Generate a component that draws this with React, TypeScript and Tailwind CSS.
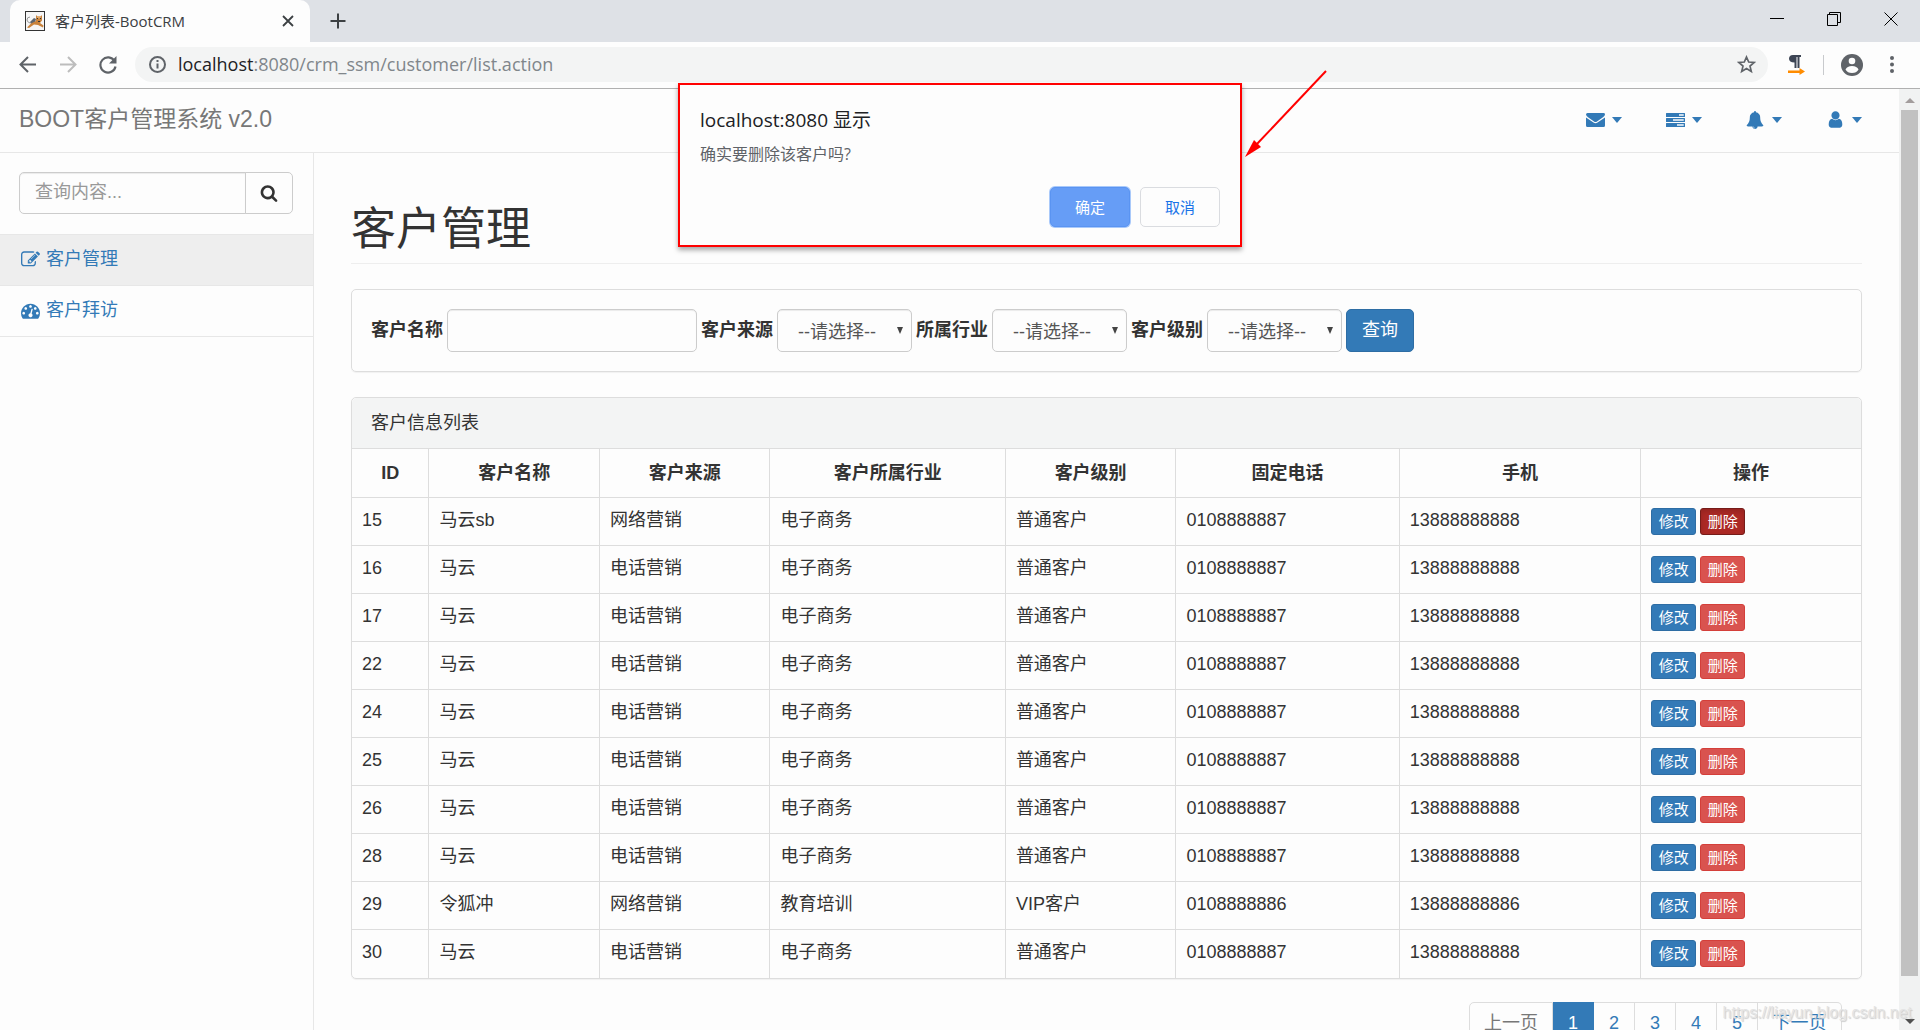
import React, { useState } from "react";

interface Customer {
  id: number;
  name: string;
  source: string;
  industry: string;
  level: string;
  phone: string;
  mobile: string;
}

const common = { industry: "电子商务", level: "普通客户", phone: "0108888887", mobile: "13888888888" };

const customers: Customer[] = [
  { id: 15, name: "马云sb", source: "网络营销", ...common },
  { id: 16, name: "马云", source: "电话营销", ...common },
  { id: 17, name: "马云", source: "电话营销", ...common },
  { id: 22, name: "马云", source: "电话营销", ...common },
  { id: 24, name: "马云", source: "电话营销", ...common },
  { id: 25, name: "马云", source: "电话营销", ...common },
  { id: 26, name: "马云", source: "电话营销", ...common },
  { id: 28, name: "马云", source: "电话营销", ...common },
  { id: 29, name: "令狐冲", source: "网络营销", industry: "教育培训", level: "VIP客户", phone: "0108888886", mobile: "13888888886" },
  { id: 30, name: "马云", source: "电话营销", ...common },
];

const columns = [
  { title: "ID", width: "w-[5.1%]" },
  { title: "客户名称", width: "w-[11.3%]" },
  { title: "客户来源", width: "w-[11.3%]" },
  { title: "客户所属行业", width: "w-[15.6%]" },
  { title: "客户级别", width: "w-[11.3%]" },
  { title: "固定电话", width: "w-[14.8%]" },
  { title: "手机", width: "w-[16%]" },
  { title: "操作", width: "w-[14.6%]" },
];

const filters = [
  { id: "source", label: "客户来源" },
  { id: "industry", label: "所属行业" },
  { id: "level", label: "客户级别" },
];

const EnvelopeIcon = () => (
  <svg className="w-[19px] h-[16px]" viewBox="0 0 19 16" fill="currentColor">
    <path d="M1.5 1h16Q19 1 19 2.4q0 1.3-2 2.8L11 9.4q-1.5 1-3 0L2 5.2Q0 3.8 0 2.5 0 1 1.5 1z" />
    <path d="M0 5.5l7.500 5.100q2 1.300 4 0L19 5.500v8Q19 15 17.500 15h-16Q0 15 0 13.500z" />
  </svg>
);

const TasksIcon = () => (
  <svg className="w-[19px] h-[16px]" viewBox="0 0 19 16" fill="currentColor">
    <path
      fillRule="evenodd"
      d="M.5 1h18q.5 0 .5.500v3q0 .5-.5.500H.5Q0 5 0 4.500v-3Q0 1 .5 1zM13 2.300v1.400h4.700V2.300zM.5 6h18q.5 0 .5.500v3q0 .5-.5.500H.5Q0 10 0 9.500v-3Q0 6 .5 6zM7 7.300v1.400h10.700V7.300zM.5 11h18q.5 0 .5.500v3q0 .5-.5.500H.5Q0 15 0 14.500v-3q0-.5.5-.5zM11 12.300v1.400h6.700v-1.400z"
    />
  </svg>
);

const BellIcon = () => (
  <svg className="w-[18px] h-[18px]" viewBox="0 0 1792 1792" fill="currentColor">
    <path d="M912 1696q0-16-16-16-59 0-101.500-42.500t-42.500-101.500q0-16-16-16t-16 16q0 73 51.500 124.500t124.500 51.500q16 0 16-16zm816-288q0 52-38 90t-90 38h-448q0 106-75 181t-181 75-181-75-75-181h-448q-52 0-90-38t-38-90q50-42 91-88t85-119.500 74.500-158.500 50-206 19.500-260q0-152 117-282.500t307-158.500q-8-19-8-39 0-40 28-68t68-28 68 28 28 68q0 20-8 39 190 28 307 158.500t117 282.500q0 139 19.500 260t50 206 74.500 158.500 85 119.500 91 88z" />
  </svg>
);

const UserIcon = () => (
  <svg className="w-[19px] h-[19px]" viewBox="0 0 1792 1792" fill="currentColor">
    <path d="M1536 1399q0 109-62.500 187t-150.500 78h-854q-88 0-150.500-78t-62.500-187q0-85 8.500-160.500t31.500-152 58.500-131 94-89 134.500-34.500q131 128 313 128t313-128q76 0 134.500 34.500t94 89 58.500 131 31.500 152 8.500 160.500zm-256-887q0 159-112.500 271.500t-271.500 112.500-271.500-112.500-112.500-271.500 112.500-271.500 271.500-112.500 271.500 112.500 112.500 271.500z" />
  </svg>
);

const EditIcon = () => (
  <svg className="w-[19px] h-[19px]" viewBox="0 0 1792 1792" fill="currentColor">
    <path d="M888 1184l116-116-152-152-116 116v56h96v96h56zm440-720q-16-16-33 1l-350 350q-17 17-1 33t33-1l350-350q17-17 1-33zm80 594v190q0 119-84.500 203.500t-203.500 84.500h-832q-119 0-203.500-84.500t-84.500-203.500v-832q0-119 84.500-203.500t203.500-84.500h832q63 0 117 25 15 7 18 23 3 17-9 29l-49 49q-14 14-32 8-23-6-45-6h-832q-66 0-113 47t-47 113v832q0 66 47 113t113 47h832q66 0 113-47t47-113v-126q0-13 9-22l64-64q15-15 35-7t20 29zm-96-738l288 288-672 672h-288v-288zm444 132l-92 92-288-288 92-92q28-28 68-28t68 28l152 152q28 28 28 68t-28 68z" />
  </svg>
);

const DashboardIcon = () => (
  <svg className="w-[19px] h-[19px]" viewBox="0 0 1792 1792" fill="currentColor">
    <path d="M384 1152q0-53-37.500-90.500t-90.500-37.500-90.500 37.500-37.500 90.500 37.500 90.500 90.500 37.500 90.500-37.500 37.500-90.500zm192-448q0-53-37.500-90.500t-90.500-37.500-90.500 37.500-37.500 90.500 37.500 90.500 90.500 37.500 90.500-37.500 37.500-90.500zm428 481l101-382q6-26-7.500-48.500t-38.500-29.500-48 6.500-30 39.500l-101 382q-60 5-107 43.500t-63 98.500q-20 77 20 146t117 89 146-20 89-117q16-60-6-117t-72-91zm660-33q0-53-37.500-90.500t-90.500-37.500-90.500 37.500-37.500 90.500 37.500 90.500 90.500 37.500 90.500-37.500 37.500-90.500zm-640-640q0-53-37.500-90.500t-90.500-37.500-90.500 37.500-37.500 90.500 37.500 90.500 90.500 37.500 90.500-37.500 37.500-90.500zm448 192q0-53-37.500-90.500t-90.500-37.500-90.500 37.500-37.500 90.500 37.500 90.500 90.500 37.500 90.500-37.500 37.500-90.500zm320 448q0 261-141 483-19 29-54 29h-1402q-35 0-54-29-141-221-141-483 0-182 71-348t191-286 286-191 348-71 348 71 286 191 191 286 71 348z" />
  </svg>
);

const SearchIcon = () => (
  <svg className="w-[18px] h-[18px]" viewBox="0 0 1792 1792" fill="currentColor">
    <path d="M1216 832q0-185-131.500-316.500t-316.500-131.500-316.500 131.500-131.500 316.500 131.500 316.500 316.500 131.500 316.500-131.500 131.500-316.500zm512 832q0 52-38 90t-90 38q-54 0-90-38l-343-342q-179 124-399 124-143 0-273.500-55.500t-225-150-150-225-55.500-273.500 55.500-273.500 150-225 225-150 273.500-55.500 273.500 55.500 225 150 150 225 55.500 273.500q0 220-124 399l343 343q37 37 37 90z" />
  </svg>
);

const CatIcon = () => (
  <svg className="w-5 h-5" viewBox="0 0 20 20">
    <rect x="0.5" y="0.5" width="19" height="19" fill="#f6f6f6" stroke="#333" />
    <path d="M5 6Q2 6 2 9q0 2 3 3" fill="none" stroke="#999" />
    <path d="M5 11l4-4 2 1-1 4-4 1z" fill="#5d6670" />
    <path d="M11 4l1.500 1.500h3L17 4v5.500L15 12l3.500 2.500-.5 2-5-2.500-4-.5L4 17l-2-.5L6 12.500l5-2.500z" fill="#c9823b" />
    <path d="M12 5.500h4v2h-4z" fill="#e2a866" />
    <path d="M12 7.500h1M15 7.500h1M13 10.500h2" stroke="#333" />
  </svg>
);

const Caret = () => <span className="border-x-[5px] border-t-[6px] border-x-transparent border-t-[#337ab7]" />;

const navMenus = [
  { label: "消息", icon: <EnvelopeIcon /> },
  { label: "任务", icon: <TasksIcon /> },
  { label: "通知", icon: <BellIcon /> },
  { label: "用户", icon: <UserIcon /> },
];

const BrowserChrome: React.FC = () => (
  <header className="shrink-0 border-b border-[#b0b0b0] font-['Open_Sans','Noto_Sans_CJK_SC',sans-serif]">
    <div className="flex h-[42px] bg-[#dee1e6] text-[#3c4043]">
      <div className="ml-[10px] flex w-[300px] items-center rounded-t-[10px] bg-[#fdfdfd] pl-[15px] pr-3">
        <CatIcon />
        <span className="ml-[10px] flex-1 text-[15px]">客户列表-BootCRM</span>
        <button aria-label="关闭标签页" className="p-1">
          <svg className="h-3 w-3" viewBox="0 0 12 12" stroke="#3c4043" strokeWidth="1.8">
            <path d="M1 1l10 10M11 1L1 11" />
          </svg>
        </button>
      </div>
      <button aria-label="新标签页" className="ml-5">
        <svg className="h-4 w-4" viewBox="0 0 16 16" stroke="#3c4043" strokeWidth="2">
          <path d="M8 .5v15M.5 8h15" />
        </svg>
      </button>
      <div className="ml-auto flex items-center gap-[43px] pb-[5px] pr-[22px]">
        <button aria-label="最小化">
          <svg className="h-[14px] w-[14px]" viewBox="0 0 14 14" stroke="#000">
            <path d="M0 6.5h14" />
          </svg>
        </button>
        <button aria-label="还原">
          <svg className="h-[14px] w-[14px]" viewBox="0 0 14 14" stroke="#000" fill="none">
            <path d="M.5 2.500h10v11H.5zM2.500 2.500v-2h11v10h-3" />
          </svg>
        </button>
        <button aria-label="关闭">
          <svg className="h-[14px] w-[14px]" viewBox="0 0 14 14" stroke="#000">
            <path d="M.5.5l13 13M13.500.5l-13 13" />
          </svg>
        </button>
      </div>
    </div>
    <div className="flex h-[46px] items-center bg-[#fdfdfd] pb-px pl-[19px] pr-[26px] text-[#5f6368]">
      <button aria-label="后退">
        <svg className="h-[17px] w-[17px]" viewBox="0 0 17 17" fill="none" stroke="#5f6368" strokeWidth="2">
          <path d="M17 8.500H2M9 1L1.500 8.500 9 16" />
        </svg>
      </button>
      <button aria-label="前进" className="ml-6">
        <svg className="h-[17px] w-[17px]" viewBox="0 0 17 17" fill="none" stroke="#bdbdbd" strokeWidth="2">
          <path d="M0 8.500h15M8 1l7.500 7.500L8 16" />
        </svg>
      </button>
      <button aria-label="刷新" className="ml-[22px]">
        <svg className="h-[18px] w-[18px]" viewBox="0 0 18 18" fill="none" stroke="#5f6368" strokeWidth="2.2">
          <path d="M15.500 5A7.600 7.600 0 1 0 16.500 10.500" />
          <path d="M17.500 0v7.500H10z" fill="#5f6368" stroke="none" />
        </svg>
      </button>
      <div className="ml-[18px] flex h-[35px] flex-1 items-center rounded-full bg-[#f3f4f4] pl-[14px] pr-3">
        <svg className="h-[17px] w-[17px]" viewBox="0 0 17 17" fill="none" stroke="#5f6368" strokeWidth="2">
          <circle cx="8.5" cy="8.5" r="7.5" />
          <path d="M8.500 7.500v5M8.500 4v2" />
        </svg>
        <p className="ml-3 flex-1 text-[18px] text-[#80868b]">
          <span className="text-[#202124]">localhost</span>:8080/crm_ssm/customer/list.action
        </p>
        <button aria-label="收藏">
          <svg className="h-[19px] w-[19px]" viewBox="0 0 19 19" fill="none" stroke="#5f6368" strokeWidth="1.7">
            <path d="M9.500 2l2.200 5 5.400.5-4.100 3.600 1.300 5.300-4.800-2.900-4.800 2.900L6 11.100 1.900 7.500 7.300 7z" />
          </svg>
        </button>
      </div>
      <svg className="ml-5 h-5 w-[17px]" viewBox="0 0 17 20">
        <path d="M5 0h8v2h-1.500v11h-2V2H8.500v11h-2V7.500Q1 7.500 1 3.800 1 0 5 0z" fill="#3d4554" />
        <path d="M0 15.500h11.500v-2.500l5.500 3.500-5.500 3.500V18H0z" fill="#ff8c00" />
      </svg>
      <span className="ml-[18px] h-5 w-px bg-[#c8cacd]" />
      <button aria-label="用户资料" className="ml-[17px]">
        <svg className="h-[22px] w-[22px]" viewBox="0 0 22 22">
          <circle cx="11" cy="11" r="11" fill="#5f6368" />
          <circle cx="11" cy="7" r="3.3" fill="#fdfdfd" />
          <path d="M4.500 15.500Q6 12 11 12t6.500 3.500Q15.500 19 11 19t-6.500-3.500z" fill="#fdfdfd" />
        </svg>
      </button>
      <button aria-label="更多" className="ml-[27px]">
        <svg className="h-[17px] w-1" viewBox="0 0 4 17" fill="#5f6368">
          <circle cx="2" cy="2" r="2" />
          <circle cx="2" cy="8.5" r="2" />
          <circle cx="2" cy="15" r="2" />
        </svg>
      </button>
    </div>
  </header>
);

const ConfirmDialog: React.FC<{ onClose: () => void }> = ({ onClose }) => (
  <div
    role="dialog"
    aria-labelledby="confirm-title"
    className="absolute left-1/2 top-[83px] z-20 w-[564px] -translate-x-1/2 border-2 border-[#f00] bg-[#fdfdfd] px-5 pb-[18px] pt-[22px] font-['Open_Sans','Noto_Sans_CJK_SC',sans-serif] shadow-[0_3px_5px_rgba(0,0,0,0.35)]"
  >
    <h2 id="confirm-title" className="text-[19px] leading-[26px] text-[#202124]">localhost:8080 显示</h2>
    <p className="mt-2 text-base leading-[26px] text-[#5f6368]">确实要删除该客户吗?</p>
    <div className="mt-5 flex justify-end gap-[10px] text-[15px]">
      <button
        onClick={onClose}
        className="h-10 w-20 rounded-[5px] border border-[#5a94f2] bg-[#669df6] text-white ring-1 ring-[#a9c9fa]"
      >
        确定
      </button>
      <button onClick={onClose} className="h-10 w-20 rounded-[5px] border border-[#dadce0] text-[#1a73e8]">
        取消
      </button>
    </div>
    {/* Arrow pointing at the dialog */}
    <svg className="absolute -right-[88px] -top-[16px] h-[90px] w-[88px]" viewBox="0 0 88 90">
      <path d="M86 2L16 76" stroke="#f00" strokeWidth="2" />
      <path d="M5 88l9-17 3 3 4 4z" fill="#f00" />
    </svg>
  </div>
);

const Sidebar: React.FC = () => (
  <aside className="w-[314px] shrink-0 border-r border-[#e7e7e7]">
    <form className="flex px-[19px] pb-5 pr-5 pt-[19px]" onSubmit={(e) => e.preventDefault()}>
      <input
        type="text"
        aria-label="查询内容"
        placeholder="查询内容..."
        className="h-[42px] w-0 flex-1 rounded-l-[5px] border border-[#ccc] bg-[#fdfdfd] px-[15px] pb-[2px] shadow-[inset_0_1px_1px_rgba(0,0,0,0.075)] placeholder:text-[#999]"
      />
      <button aria-label="查询" className="-ml-px flex w-12 items-center justify-center rounded-r-[5px] border border-[#ccc]">
        <SearchIcon />
      </button>
    </form>
    <nav className="text-[#337ab7]">
      <a href="#customer" className="flex h-[52px] items-center gap-[6px] border-y border-[#e7e7e7] bg-[#eee] pb-[2px] pl-[21px]">
        <EditIcon />
        客户管理
      </a>
      <a href="#visit" className="flex h-[51px] items-center gap-[6px] border-b border-[#e7e7e7] pb-[2px] pl-[21px]">
        <DashboardIcon />
        客户拜访
      </a>
    </nav>
  </aside>
);

const CustomerTable: React.FC<{ activeId: number; onDelete: (id: number) => void }> = ({ activeId, onDelete }) => (
  <section className="mt-[25px] rounded-[5px] border border-[#ddd] shadow-[0_1px_1px_rgba(0,0,0,0.05)]">
    <h2 className="h-[50px] rounded-t-[5px] bg-[#f3f4f4] px-[19px] leading-[51px]">客户信息列表</h2>
    <table className="w-full table-fixed border-collapse">
      <thead>
        <tr className="h-[49px] border-y border-[#ddd]">
          {columns.map((col) => (
            <th key={col.title} className={`${col.width} border-l border-[#ddd] font-bold first:border-l-0`}>
              {col.title}
            </th>
          ))}
        </tr>
      </thead>
      <tbody>
        {customers.map((c) => (
          <tr key={c.id} className="h-12 border-b border-[#ddd] last:border-b-0 [&>td]:border-l [&>td]:border-[#ddd] [&>td]:px-[10px] [&>td]:pb-[2px] [&>td:first-child]:border-l-0">
            <td>{c.id}</td>
            <td>{c.name}</td>
            <td>{c.source}</td>
            <td>{c.industry}</td>
            <td>{c.level}</td>
            <td>{c.phone}</td>
            <td>{c.mobile}</td>
            <td>
              <div className="flex gap-1 pt-[2px] text-[15px] text-white">
                <button className="h-[27px] w-[45px] rounded-[3px] border border-[#2e6da4] bg-[#337ab7]">修改</button>
                <button
                  onClick={() => onDelete(c.id)}
                  className={`h-[27px] w-[45px] rounded-[3px] border ${
                    c.id === activeId
                      ? "border-[#761c19] bg-[#ac2925] shadow-[inset_0_3px_5px_rgba(0,0,0,0.125)]"
                      : "border-[#d43f3a] bg-[#d9534f]"
                  }`}
                >
                  删除
                </button>
              </div>
            </td>
          </tr>
        ))}
      </tbody>
    </table>
  </section>
);

const Pagination: React.FC = () => (
  <nav className="mr-5 mt-[23px] flex justify-end text-[#337ab7]">
    <a href="#prev" className="flex h-[43px] w-[84px] items-center justify-center rounded-l-[5px] border border-[#ddd] text-[#777]">上一页</a>
    {[1, 2, 3, 4, 5].map((page) => (
      <a
        key={page}
        href={`#page-${page}`}
        className={`flex h-[43px] w-[41px] items-center justify-center border-y border-r ${
          page === 1 ? "border-[#337ab7] bg-[#337ab7] text-white" : "border-[#ddd]"
        }`}
      >
        {page}
      </a>
    ))}
    <a href="#next" className="flex h-[43px] w-[84px] items-center justify-center rounded-r-[5px] border-y border-r border-[#ddd]">下一页</a>
  </nav>
);

const App: React.FC = () => {
  const [dialogOpen, setDialogOpen] = useState(true);
  const [activeId, setActiveId] = useState(15);

  const handleDelete = (id: number) => {
    setActiveId(id);
    setDialogOpen(true);
  };

  return (
    <div className="relative flex h-screen flex-col overflow-hidden bg-[#fdfdfd] font-['Liberation_Sans','Noto_Sans_CJK_SC',sans-serif] text-[18px] leading-[25px] text-[#333]">
      <BrowserChrome />

      <div className="flex min-h-0 flex-1">
        <div className="flex min-w-0 flex-1 flex-col">
          {/* Navbar */}
          <div className="flex h-16 shrink-0 items-center justify-between border-b border-[#e7e7e7] pb-[2px] pl-[19px] pr-[37px]">
            <a href="#home" className="text-[23px] text-[#777]">BOOT客户管理系统 v2.0</a>
            <div className="flex gap-11">
              {navMenus.map((menu) => (
                <button key={menu.label} aria-label={menu.label} className="flex w-9 items-center justify-between text-[#337ab7]">
                  {menu.icon}
                  <Caret />
                </button>
              ))}
            </div>
          </div>

          <div className="flex min-h-0 flex-1">
            <Sidebar />

            <main className="min-w-0 flex-1 overflow-hidden px-[37px]">
              <h1 className="mt-[50px] h-[61px] border-b border-[#eee] text-[45px] leading-[54px]">客户管理</h1>

              <form
                className="mt-[25px] flex items-center gap-1 rounded-[5px] border border-[#ddd] p-[19px] shadow-[0_1px_1px_rgba(0,0,0,0.05)]"
                onSubmit={(e) => e.preventDefault()}
              >
                <label htmlFor="name" className="font-bold">客户名称</label>
                <input
                  id="name"
                  type="text"
                  className="h-[43px] w-[250px] rounded-[5px] border border-[#ccc] bg-[#fdfdfd] px-[15px] shadow-[inset_0_1px_1px_rgba(0,0,0,0.075)]"
                />
                {filters.map((f) => (
                  <React.Fragment key={f.id}>
                    <label htmlFor={f.id} className="font-bold">{f.label}</label>
                    <div className="relative">
                      <select
                        id={f.id}
                        className="h-[43px] w-[135px] appearance-none rounded-[5px] border border-[#ccc] bg-[#fdfdfd] pl-5 pt-1 text-[#555] shadow-[inset_0_1px_1px_rgba(0,0,0,0.075)]"
                      >
                        <option>--请选择--</option>
                      </select>
                      <span className="pointer-events-none absolute right-[9px] top-[18px] border-x-[3px] border-t-[7px] border-x-transparent border-t-[#444]" />
                    </div>
                  </React.Fragment>
                ))}
                <button className="h-[43px] w-[68px] rounded-[5px] border border-[#2e6da4] bg-[#337ab7] text-white">查询</button>
              </form>

              <CustomerTable activeId={activeId} onDelete={handleDelete} />
              <Pagination />
            </main>
          </div>
        </div>

        {/* Scrollbar */}
        <div className="flex w-[21px] shrink-0 flex-col items-center justify-between bg-[#f1f2f2] pb-[6px] pt-[9px]">
          <span className="border-x-[5px] border-b-[5px] border-x-transparent border-b-[#a39d9d]" />
          <span className="mb-[43px] mt-[7px] w-[17px] flex-1 bg-[#c1c1c1]" />
          <span className="border-x-[5px] border-t-[5px] border-x-transparent border-t-[#505050]" />
        </div>
      </div>

      {dialogOpen && <ConfirmDialog onClose={() => setDialogOpen(false)} />}

      <p className="pointer-events-none absolute bottom-[5px] right-2 text-base text-[#e4e4e4] [text-shadow:1px_1px_1px_#ccc]">
        https://liayun.blog.csdn.net
      </p>
    </div>
  );
};

export default App;
